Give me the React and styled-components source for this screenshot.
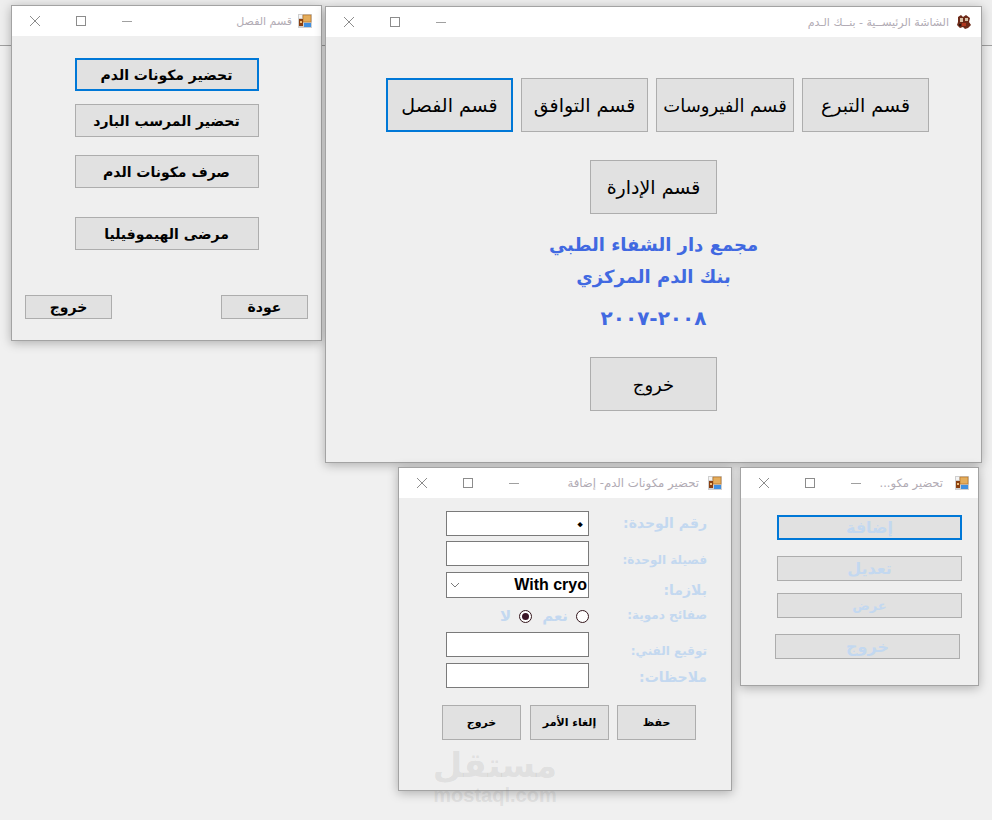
import React from "react";
import styled, { createGlobalStyle } from "styled-components";

const arabic = `Tahoma, "DejaVu Sans", "Noto Sans", sans-serif`;

const GlobalStyle = createGlobalStyle`
  html, body {
    margin: 0;
    padding: 0;
    background: #f0f0f0;
  }
  #root {
    width: 992px;
    height: 820px;
    overflow: hidden;
  }
`;

const Desktop = styled.div`
  position: relative;
  width: 992px;
  height: 820px;
  background: #f0f0f0;
  font-family: ${arabic};
`;

const TopStrip = styled.div`
  height: 45px;
  background: #eeeeee;
  border-bottom: 1px solid #a0a0a0;
`;

const Window = styled.section`
  position: absolute;
  left: ${(p) => p.$x}px;
  top: ${(p) => p.$y}px;
  width: ${(p) => p.$w}px;
  height: ${(p) => p.$h}px;
  box-sizing: border-box;
  display: flex;
  flex-direction: column;
  background: #efefef;
  border: 1px solid #a3a3a3;
  box-shadow: 0 2px 10px rgba(0, 0, 0, 0.28);
`;

const TitleBar = styled.header`
  height: 30px;
  flex: none;
  display: flex;
  align-items: center;
  background: #ffffff;
  padding-right: 9px;
`;

const Controls = styled.div`
  display: flex;
  margin-right: auto;
`;

const ControlBtn = styled.span`
  width: 46px;
  height: 30px;
  display: flex;
  align-items: center;
  justify-content: center;
`;

const TitleText = styled.span`
  font-size: ${(p) => p.$size || 11}px;
  color: #b1abb4;
  margin-right: ${(p) => p.$gap || 6}px;
  white-space: nowrap;
  direction: rtl;
`;

const Body = styled.div`
  flex: 1;
  display: flex;
  flex-direction: column;
  align-items: ${(p) => p.$align || "center"};
  padding-top: ${(p) => p.$top}px;
`;

const Button = styled.button`
  box-sizing: border-box;
  width: ${(p) => p.$w}px;
  height: ${(p) => p.$h}px;
  flex: none;
  margin: ${(p) => p.$mt || 0}px 0 0 ${(p) => p.$ml || 0}px;
  padding: 0;
  background: #e1e1e1;
  border: ${(p) => (p.$focus ? "2px solid #0078d7" : "1px solid #adadad")};
  color: ${(p) => p.$color || "#000000"};
  font-family: ${arabic};
  font-size: ${(p) => p.$size}px;
  font-weight: ${(p) => (p.$bold ? 700 : 400)};
  direction: rtl;
`;

const BottomRow = styled.div`
  align-self: stretch;
  display: flex;
  justify-content: space-between;
  margin-top: ${(p) => p.$mt}px;
  padding: 0 13px;
`;

const ButtonRow = styled.div`
  align-self: flex-start;
  display: flex;
  gap: 8px;
  margin-left: ${(p) => p.$ml}px;
`;

const Heading = styled.div`
  color: #4169e1;
  font-size: ${(p) => p.$size || 18}px;
  font-weight: 700;
  line-height: 32px;
  margin-top: ${(p) => p.$mt || 0}px;
  direction: ${(p) => p.$dir || "rtl"};
`;

const FormRow = styled.div`
  display: flex;
  align-items: flex-start;
  height: ${(p) => p.$h || 25}px;
  margin: ${(p) => p.$mt || 0}px 0 0 47px;
`;

const Field = styled.div`
  box-sizing: border-box;
  width: 143px;
  height: ${(p) => p.$h || 25}px;
  flex: none;
  display: flex;
  align-items: center;
  justify-content: space-between;
  padding: 0 1px 0 3px;
  background: #ffffff;
  border: 1px solid #7a7a7a;
`;

const FieldValue = styled.span`
  font-family: ${(p) => (p.$latin ? `"Liberation Sans", Arial, sans-serif` : arabic)};
  font-size: ${(p) => (p.$latin ? 16 : 22)}px;
  line-height: 22px;
  font-weight: 700;
  color: #000000;
  margin-left: auto;
  transform: ${(p) => (p.$latin ? "none" : "rotate(45deg)")};
`;

const Label = styled.label`
  width: 118px;
  flex: none;
  box-sizing: border-box;
  padding-top: ${(p) => p.$pt || 0}px;
  text-align: right;
  direction: rtl;
  color: #c3d8f0;
  font-size: ${(p) => p.$size || 14}px;
  font-weight: 700;
  line-height: 18px;
  white-space: nowrap;
`;

const RadioGroup = styled.div`
  width: 143px;
  flex: none;
  display: flex;
  align-items: center;
  justify-content: flex-end;
  height: 20px;
`;

const RadioText = styled.span`
  color: #c3d8f0;
  font-size: 15px;
  font-weight: 700;
  margin-right: ${(p) => p.$mr}px;
`;

const Radio = styled.span`
  box-sizing: border-box;
  width: 13px;
  height: 13px;
  margin-right: ${(p) => p.$mr || 0}px;
  border-radius: 50%;
  border: 1px solid #33161c;
  background: #ffffff;
  display: flex;
  align-items: center;
  justify-content: center;
  &::after {
    content: "";
    display: ${(p) => (p.$on ? "block" : "none")};
    width: 7px;
    height: 7px;
    border-radius: 50%;
    background: #3b1526;
  }
`;

const ActionRow = styled.div`
  display: flex;
  gap: 8px;
  margin: 17px 0 0 43px;
`;

const Watermark = styled.div`
  position: absolute;
  left: 432px;
  top: 744px;
  width: 126px;
  display: flex;
  flex-direction: column;
  align-items: center;
  color: rgba(120, 120, 120, 0.14);
  font-weight: 700;
  pointer-events: none;
`;

const WatermarkMark = styled.span`
  font-size: 34px;
  line-height: 43px;
  direction: rtl;
`;

const WatermarkUrl = styled.span`
  font-family: "Liberation Sans", Arial, sans-serif;
  font-size: 20px;
  line-height: 16px;
`;

const WindowControls = () => (
  <Controls>
    <ControlBtn>
      <svg width="12" height="12" viewBox="0 0 12 12" fill="none" stroke="#8c8c8c">
        <path d="M1 1l10 10M11 1L1 11" />
      </svg>
    </ControlBtn>
    <ControlBtn>
      <svg width="10" height="10" viewBox="0 0 10 10" fill="none" stroke="#8c8c8c">
        <rect x="0.5" y="0.5" width="9" height="9" />
      </svg>
    </ControlBtn>
    <ControlBtn>
      <svg width="10" height="10" viewBox="0 0 10 10" fill="none" stroke="#a0a0a0">
        <path d="M0 5.5h10" />
      </svg>
    </ControlBtn>
  </Controls>
);

const FormIcon = () => (
  <svg width="14" height="14" viewBox="0 0 14 14">
    <rect x="0" y="0" width="14" height="14" fill="#cfcfcf" />
    <rect x="1" y="1" width="3" height="3" fill="#f4f4f4" />
    <rect x="5" y="1" width="8" height="7" fill="#e4ad5c" stroke="#b06a1c" strokeWidth="0.6" />
    <rect x="1" y="5" width="4" height="7" fill="#8a3f10" />
    <rect x="2" y="7" width="2" height="2" fill="#f3c27a" />
    <rect x="6" y="9" width="7" height="4" fill="#3f8fe0" />
  </svg>
);

const BankIcon = () => (
  <svg width="16" height="16" viewBox="0 0 16 16">
    <path d="M2 3l3-2 2 2 3-2 4 3-1 4 2 3-3 3-3 1-2-2-3 1-3-3 1-3z" fill="#6d2a18" />
    <path d="M4 4h3v4H4zM9 4h3v3H9z" fill="#d9c3a8" />
    <path d="M6 9h4v3H6z" fill="#b2371e" />
    <path d="M3 10h2v2H3z" fill="#2a1510" />
  </svg>
);

const Title = ({ text, size, gap, icon }) => (
  <TitleBar>
    <WindowControls />
    <TitleText $size={size} $gap={gap}>{text}</TitleText>
    {icon || <FormIcon />}
  </TitleBar>
);

const faded = "#c3d8f0";

const App = () => (
  <Desktop>
    <GlobalStyle />
    <TopStrip />

    <Window $x={11} $y={5} $w={311} $h={336}>
      <Title text="قسم الفصل" />
      <Body $top={22}>
        <Button $w={184} $h={33} $size={14} $bold $focus>تحضير مكونات الدم</Button>
        <Button $w={184} $h={33} $size={14} $bold $mt={13}>تحضير المرسب البارد</Button>
        <Button $w={184} $h={33} $size={14} $bold $mt={18}>صرف مكونات الدم</Button>
        <Button $w={184} $h={33} $size={14} $bold $mt={29}>مرضى الهيموفيليا</Button>
        <BottomRow $mt={45}>
          <Button $w={87} $h={24} $size={14} $bold>خروج</Button>
          <Button $w={87} $h={24} $size={14} $bold>عودة</Button>
        </BottomRow>
      </Body>
    </Window>

    <Window $x={325} $y={6} $w={657} $h={457}>
      <Title text="الشاشة الرئيســية - بنــك الـدم" size={11} gap={7} icon={<BankIcon />} />
      <Body $top={41}>
        <ButtonRow $ml={60}>
          <Button $w={127} $h={54} $size={19} $focus>قسم الفصل</Button>
          <Button $w={127} $h={54} $size={19}>قسم التوافق</Button>
          <Button $w={138} $h={54} $size={18}>قسم الفيروسات</Button>
          <Button $w={127} $h={54} $size={19}>قسم التبرع</Button>
        </ButtonRow>
        <Button $w={127} $h={54} $size={19} $mt={28}>قسم الإدارة</Button>
        <Heading $mt={15}>مجمع دار الشفاء الطبي</Heading>
        <Heading>بنك الدم المركزي</Heading>
        <Heading $mt={9} $dir="ltr" $size={20}>٢٠٠٨-٢٠٠٧</Heading>
        <Button $w={127} $h={54} $size={18} $mt={23}>خروج</Button>
      </Body>
    </Window>

    <Window $x={398} $y={467} $w={334} $h={324}>
      <Title text="تحضير مكونات الدم- إضافة" size={11.7} gap={9} />
      <Body $top={13} $align="flex-start">
        <FormRow>
          <Field>
            <FieldValue>٠</FieldValue>
          </Field>
          <Label $size={14} $pt={3}>رقم الوحدة:</Label>
        </FormRow>
        <FormRow $mt={5}>
          <Field />
          <Label $size={12} $pt={10}>فصيلة الوحدة:</Label>
        </FormRow>
        <FormRow $mt={6} $h={26}>
          <Field $h={26}>
            <svg width="10" height="6" viewBox="0 0 10 6" fill="none" stroke="#7a7a7a">
              <path d="M1 1l4 4 4-4" />
            </svg>
            <FieldValue $latin>With cryo</FieldValue>
          </Field>
          <Label $size={14} $pt={9}>بلازما:</Label>
        </FormRow>
        <FormRow $mt={8} $h={20}>
          <RadioGroup>
            <RadioText $mr={8}>لا</RadioText>
            <Radio $on $mr={10} />
            <RadioText $mr={8}>نعم</RadioText>
            <Radio />
          </RadioGroup>
          <Label $size={12} $pt={0}>صفائح دموية:</Label>
        </FormRow>
        <FormRow $mt={6}>
          <Field />
          <Label $size={12} $pt={10}>توقيع الفني:</Label>
        </FormRow>
        <FormRow $mt={6}>
          <Field />
          <Label $size={14} $pt={5}>ملاحظات:</Label>
        </FormRow>
        <ActionRow>
          <Button $w={79} $h={35} $size={11} $bold>خروج</Button>
          <Button $w={79} $h={35} $size={11} $bold $ml={1}>إلغاء الأمر</Button>
          <Button $w={79} $h={35} $size={11} $bold>حفظ</Button>
        </ActionRow>
      </Body>
    </Window>

    <Window $x={740} $y={467} $w={239} $h={219}>
      <Title text="تحضير مكو..." size={11.5} gap={12} />
      <Body $top={17} $align="flex-start">
        <Button $w={185} $h={25} $size={16} $bold $focus $color={faded} $ml={36}>إضافة</Button>
        <Button $w={185} $h={25} $size={16} $bold $color={faded} $ml={36} $mt={16}>تعديل</Button>
        <Button $w={185} $h={25} $size={13} $bold $color={faded} $ml={36} $mt={12}>عرض</Button>
        <Button $w={185} $h={25} $size={16} $bold $color={faded} $ml={34} $mt={16}>خروج</Button>
      </Body>
    </Window>

    <Watermark>
      <WatermarkMark>مستقل</WatermarkMark>
      <WatermarkUrl>mostaql.com</WatermarkUrl>
    </Watermark>
  </Desktop>
);

export default App;
